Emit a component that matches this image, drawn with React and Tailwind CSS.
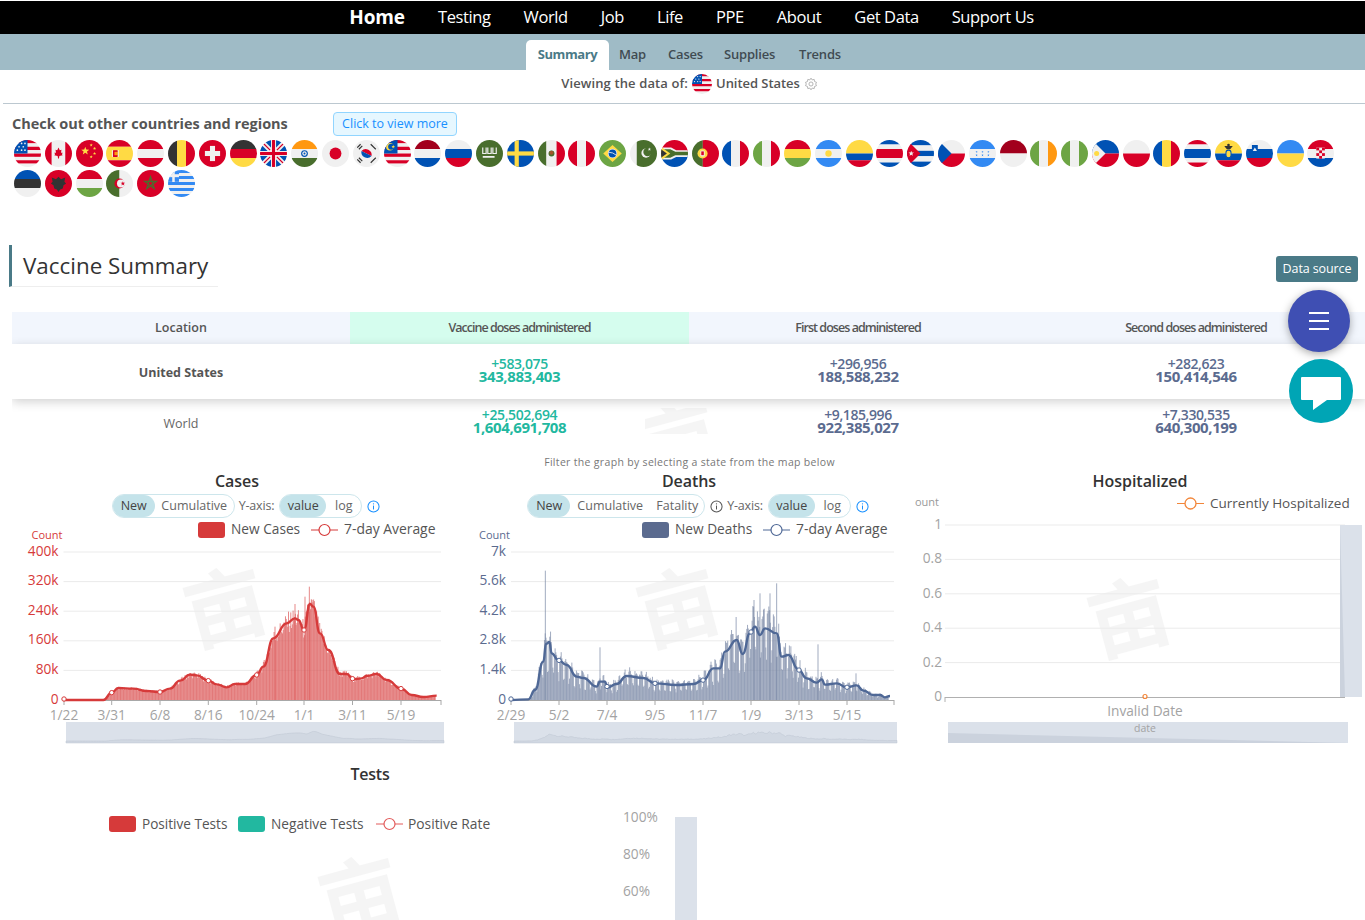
import React from 'react';

const R='#d80027',B='#0052b4',W='#f0f0f0',Y='#ffda44',G='#6da544',DG='#496e2d',LB='#338af3',K='#333333',DR='#a2001d',O='#ff9811';
const H=(cs,ws)=>{const t=(ws||cs.map(()=>1)).reduce((a,b)=>a+b,0);let y=0;return cs.map((c,i)=>{const h=((ws?ws[i]:1)/t)*32;const e=<rect key={'h'+i} x="0" y={y} width="32" height={h+0.05} fill={c}/>;y+=h;return e;});};
const V=(cs,ws)=>{const t=(ws||cs.map(()=>1)).reduce((a,b)=>a+b,0);let x=0;return cs.map((c,i)=>{const w=((ws?ws[i]:1)/t)*32;const e=<rect key={'v'+i} x={x} y="0" width={w+0.05} height="32" fill={c}/>;x+=w;return e;});};
const star=(cx,cy,r,fill,k)=>{let p=[];for(let i=0;i<10;i++){const a=-Math.PI/2+i*Math.PI/5,q=i%2?r*0.42:r;p.push((cx+q*Math.cos(a)).toFixed(2)+','+(cy+q*Math.sin(a)).toFixed(2));}return <polygon key={k} points={p.join(' ')} fill={fill}/>;};
const stripes=[R,W,R,W,R,W,R,W];
const flags={
us:<>{H(stripes)}<rect width="16" height="16" fill={B}/>{[[4,4],[9,4],[13,4],[6,8],[11,8],[4,12],[9,12],[13,12]].map(([x,y],i)=><circle key={i} cx={x} cy={y} r="1" fill={W}/>)}</>,
ca:<>{V([R,W,R],[1,2,1])}<polygon points="16,9 17.5,12 19.5,11.5 19,15 21,15 20,17 21,18 17,19 16.5,22 15.5,22 15,19 11,18 12,17 11,15 13,15 12.5,11.5 14.5,12" fill={R}/></>,
cn:<><rect width="32" height="32" fill={R}/>{star(11,13,5,Y,'a')}{star(18,6,2,Y,'b')}{star(22,10,2,Y,'c')}{star(22,16,2,Y,'d')}{star(18,20,2,Y,'e')}</>,
es:<>{H([R,Y,R],[1,2,1])}<rect x="8" y="12" width="6" height="8" rx="1" fill={R}/><rect x="10" y="14" width="5" height="4" fill={O}/><rect x="7" y="12" width="1.2" height="8" fill={W}/><rect x="14" y="12" width="1.2" height="8" fill={W}/></>,
at:H([R,W,R]),be:V([K,Y,R]),
ch:<><rect width="32" height="32" fill={R}/><rect x="13" y="7" width="6" height="18" fill={W}/><rect x="7" y="13" width="18" height="6" fill={W}/></>,
de:H([K,R,Y]),
gb:<><rect width="32" height="32" fill={W}/><polygon points="4,0 13,0 13,9" fill={B}/><polygon points="19,0 28,0 19,9" fill={B}/><polygon points="0,4 9,13 0,13" fill={B}/><polygon points="32,4 23,13 32,13" fill={B}/><polygon points="0,28 9,19 0,19" fill={B}/><polygon points="32,28 23,19 32,19" fill={B}/><polygon points="4,32 13,23 13,32" fill={B}/><polygon points="28,32 19,23 19,32" fill={B}/><rect x="14.2" width="3.6" height="32" fill={R}/><rect y="14.2" width="32" height="3.6" fill={R}/><path d="M2 2L12 12M30 2L20 12M2 30L12 20M30 30L20 20" stroke={R} strokeWidth="1.5"/></>,
in:<>{H([O,W,DG])}<circle cx="16" cy="16" r="4" fill={B}/><circle cx="16" cy="16" r="2.6" fill={W}/><circle cx="16" cy="16" r="1.2" fill={B}/></>,
jp:<><rect width="32" height="32" fill={W}/><circle cx="16" cy="16" r="7" fill={R}/></>,
kr:<><rect width="32" height="32" fill={W}/><path d="M10 13a7 7 0 0 1 12 6z" fill={R}/><path d="M10 13a7 7 0 0 0 12 6z" fill={B}/><path d="M5 9l4-4M7 11l4-4M21 5l4 4M23 7l4 4M5 23l4 4M7 21l4 4M21 27l4-4M23 25l4-4" stroke={K} strokeWidth="1.4"/></>,
my:<>{H([R,W,R,W,R,W,R,W])}<rect width="16" height="16" fill={B}/><circle cx="7" cy="8" r="4.5" fill={Y}/><circle cx="8.5" cy="8" r="3.6" fill={B}/>{star(11,8,2.2,Y,'m')}</>,
nl:H([DR,W,B]),ru:H([W,B,R]),
sa:<><rect width="32" height="32" fill={DG}/><path d="M8 9v7h4V9M14 9v7h4V9M20 9v7h4V9" stroke={W} strokeWidth="1.4" fill="none"/><path d="M8 20h14" stroke={W} strokeWidth="1.8"/></>,
se:<><rect width="32" height="32" fill={B}/><rect x="9" width="5" height="32" fill={Y}/><rect y="13.5" width="32" height="5" fill={Y}/></>,
mx:<>{V([DG,W,R],[1,1.2,1])}<circle cx="16" cy="16" r="3.5" fill={DG}/><circle cx="16" cy="15" r="2.4" fill="#a2562a"/></>,
pe:V([R,W,R]),
br:<><rect width="32" height="32" fill={G}/><polygon points="16,6 27,16 16,26 5,16" fill={Y}/><circle cx="16" cy="16" r="5.5" fill={W}/><circle cx="16" cy="16" r="4.6" fill={B}/><path d="M11.5 14.5q5 0 9 3.5" stroke={W} strokeWidth="1" fill="none"/></>,
pk:<>{V([W,DG],[1,3])}<circle cx="19" cy="15.5" r="5.5" fill={W}/><circle cx="20.8" cy="14.2" r="5" fill={DG}/>{star(23,11,2,W,'p')}</>,
za:<>{H([R,B])}<polygon points="0,9 12,9 18,12 32,12 32,20 18,20 12,23 0,23" fill={W}/><polygon points="0,11 11,11 17,14 32,14 32,18 17,18 11,21 0,21" fill={DG}/><polygon points="0,8 11,16 0,24" fill={Y}/><polygon points="0,11 7,16 0,21" fill={K}/></>,
pt:<>{V([DG,R],[2,3])}<circle cx="12.5" cy="16" r="6" fill={Y}/><rect x="10" y="12.5" width="5" height="7" rx="1.5" fill={W}/><rect x="11" y="13.5" width="3" height="4.5" fill={R}/></>,
fr:V([B,W,R]),it:V([G,W,R]),bo:H([R,Y,G]),
ar:<>{H([LB,W,LB])}<circle cx="16" cy="16" r="3.8" fill={Y}/></>,
co:H([Y,B,R],[2,1,1]),cr:H([B,W,R,W,B],[1,1,2,1,1]),
cu:<>{H([B,W,B,W,B])}<polygon points="0,0 16,16 0,32" fill={R}/>{star(5,16,3.4,W,'u')}</>,
cz:<>{H([W,R])}<polygon points="0,0 16,16 0,32" fill={B}/></>,
hn:<>{H([LB,W,LB])}{[[9,14],[16,14],[23,14],[9,18],[16,18],[23,18]].map(([x,y],i)=>star(x,y,1.4,LB,i))}</>,
id:H([DR,W]),ie:V([G,W,O]),ng:V([G,W,G]),
ph:<>{H([B,R])}<polygon points="0,0 16,16 0,32" fill={W}/><circle cx="5.5" cy="16" r="3" fill={Y}/></>,
pl:H([W,R]),ro:V([B,Y,R]),th:H([R,W,B,W,R],[1,1,2,1,1]),
ec:<>{H([Y,B,R],[2,1,1])}<rect x="13" y="12" width="6" height="9" rx="3" fill={Y} stroke={B} strokeWidth="1.2"/><polygon points="11,7 21,7 18,11 14,11" fill={K}/><circle cx="16" cy="6" r="1.6" fill={K}/></>,
si:<>{H([W,B,R])}<path d="M7 6h7v6q0 3-3.5 4.5Q7 15 7 12z" fill={B}/><polygon points="10.5,9 13,13 8,13" fill={W}/></>,
ua:H([LB,Y]),
hr:<>{H([R,W,B])}<rect x="11" y="9" width="10" height="13" fill={W}/>{[0,1,2,3].flatMap(r=>[0,1,2].map(c=>(r+c)%2?null:<rect key={r+'-'+c} x={11+c*3.4} y={9+r*3.3} width="3.4" height="3.3" fill={R}/>))}</>,
ee:H([B,K,W]),
al:<><rect width="32" height="32" fill={R}/><path d="M16 8l3 3 5-2-1 5 2 2-3 2-1 4-3 1-2 3-2-3-3-1-1-4-3-2 2-2-1-5 5 2z" fill={K}/></>,
hu:H([R,W,G]),
dz:<>{V([DG,W])}<circle cx="16" cy="16" r="6" fill={R}/><circle cx="17.8" cy="16" r="4.8" fill={W}/>{star(20,16,2.8,R,'z')}</>,
ma:<><rect width="32" height="32" fill={R}/><polygon points="16,8 20.5,22 9,13.5 23,13.5 11.5,22" fill="none" stroke={DG} strokeWidth="1.5"/></>,
gr:<>{H([LB,W,LB,W,LB,W,LB,W,LB])}<rect width="13" height="14" fill={W}/><rect width="5" height="5" fill={LB}/><rect x="8" width="5" height="5" fill={LB}/><rect y="8.5" width="5" height="5.5" fill={LB}/><rect x="8" y="8.5" width="5" height="5.5" fill={LB}/></>,
};
const order='us ca cn es at be ch de gb in jp kr my nl ru sa se mx pe br pk za pt fr it bo ar co cr cu cz hn id ie ng ph pl ro th ec si ua hr ee al hu dz ma gr'.split(' ');

function Flag({c,size=27}){
  const id=React.useId();
  return <svg width={size} height={size} viewBox="0 0 32 32" className="block"><clipPath id={id}><circle cx="16" cy="16" r="16"/></clipPath><g clipPath={`url(#${id})`}>{flags[c]}</g></svg>;
}

const interp=(pts,x)=>{for(let i=1;i<pts.length;i++){if(x<=pts[i][0]){const[a,b]=pts[i-1],[c,d]=pts[i];return b+(d-b)*(x-a)/((c-a)||1);}}return pts[pts.length-1][1];};
const rnd=(i)=>{const s=Math.sin(i*12.9898)*43758.5453;return s-Math.floor(s);};
const toPage=(p,ox,oy)=>p.map(([x,y])=>[ox+x/3,oy+y/3]);

const casesAvg=toPage([[190,750],[310,750],[335,728],[355,714],[400,716],[440,723],[480,726],[510,716],[540,692],[570,674],[590,676],[625,692],[650,703],[680,712],[705,702],[735,702],[770,675],[790,650],[820,565],[860,520],[885,505],[895,510],[912,540],[930,462],[940,470],[960,550],[985,600],[1020,672],[1040,672],[1060,688],[1085,685],[1100,678],[1130,672],[1160,690],[1205,717],[1235,735],[1270,741],[1310,737]],0,450);
const deathsAvg=toPage([[153,750],[205,748],[225,720],[250,635],[258,582],[268,576],[275,610],[295,630],[320,645],[350,680],[370,684],[410,710],[420,695],[435,695],[442,712],[470,702],[500,678],[550,684],[585,700],[650,705],[700,702],[730,690],[760,655],[780,655],[795,605],[830,570],[848,612],[870,550],[885,530],[900,555],[915,535],[950,550],[965,620],[985,615],[1015,658],[1040,685],[1070,698],[1085,688],[1095,704],[1130,700],[1160,712],[1190,706],[1210,722],[1240,735],[1260,735],[1275,742],[1290,738]],460,450);
const deathSpikes=[[256,362],[420,592],[950,400],[882,450],[900,430],[930,430],[1074,583],[1188,670]].map(([x,y])=>[460+x/3,450+y/3]);
const caseSpikes=[[928,410],[915,440],[885,462],[825,530]].map(([x,y])=>[x/3,450+y/3]);

function Bars({avg,x0,x1,base,color,amp,weekly,spikes}){
  const n=Math.round((x1-x0)/0.76);
  let d='';
  for(let i=0;i<n;i++){
    const x=x0+(i/n)*(x1-x0);
    const h=base-interp(avg,x);
    if(h<0.6) continue;
    const wk=[0.62,1.08,1.25,1.22,1.18,1.05,0.6][i%7];
    const f=weekly? wk+(rnd(i)-0.5)*0.3 : 1+(rnd(i)-0.5)*amp;
    d+=`M${x.toFixed(2)} ${base}V${(base-h*f).toFixed(1)}`;
  }
  (spikes||[]).forEach(([x,y])=>{d+=`M${x.toFixed(2)} ${base}V${y}`;});
  return <path d={d} stroke={color} strokeWidth="1" fill="none" opacity="0.72"/>;
}
const smooth=(pts)=>{let d=`M${pts[0][0]} ${pts[0][1]}`;for(let i=1;i<pts.length;i++){const p=pts[i-1],q=pts[i],m=(p[0]+q[0])/2;d+=`C${m} ${p[1]} ${m} ${q[1]} ${q[0]} ${q[1]}`;}return d;};
const Mini=({avg,x0,x1,tx0,tx1,base,amp})=>{
  const sc=(tx1-tx0)/(x1-x0);
  let pts=[];
  for(let i=0;i<=240;i++){const x=x0+(i/240)*(x1-x0);const h=base-interp(avg,x);pts.push((tx0+(x-x0)*sc).toFixed(1)+','+(741-h*0.1-(amp?rnd(i)*h*0.035:0)).toFixed(1));}
  return <polygon points={`${tx0},743 ${pts.join(' ')} ${tx1},743`} fill="#d1d8e2" stroke="#bcc4d0" strokeWidth="0.5"/>;
};

const Watermark=({x,y,size=82})=><text x={x} y={y} fontSize={size} textAnchor="middle" fill="#000" opacity="0.035" fontWeight="700" fontFamily="'Noto Sans CJK SC',sans-serif" transform={`rotate(-15 ${x} ${y})`}>亩</text>;

function Chart({ox,x0,x1,labels,color,ticks,tickLabels,avg,spikes,weekly,amp,sl0,sl1,legendRect,legendText,avgLine,lineColor,rectColor,barColor,wm}){
  const ys=[552,581.6,611.2,640.8,670.4,700];
  return <svg width="452" height="226" viewBox={`${ox} 520 452 226`} className="block" fontFamily="'Open Sans',sans-serif">
    <Watermark x={wm} y={636}/>
    <text x={x0-32} y={539} fontSize="11" fill={color}>Count</text>
    {ys.map((y,i)=><g key={i}>
      {i<5&&<line x1={x0} x2={x1} y1={y} y2={y} stroke="#ebebeb"/>}
      <text x={x0-5} y={y+3.5} fontSize="13.7" textAnchor="end" fill={color}>{labels[i]}</text>
    </g>)}
    <Bars avg={avg} x0={x0} x1={x1-5} base={700} color={barColor} amp={amp} weekly={weekly} spikes={spikes}/>
    <line x1={x0} x2={x1} y1={700.5} y2={700.5} stroke="#a8a8a8"/>
    {ticks.map((t,i)=><line key={i} x1={t} x2={t} y1={700} y2={705} stroke="#a8a8a8"/>)}
    <line x1={x1} x2={x1} y1={700} y2={705} stroke="#a8a8a8"/>
    {ticks.map((t,i)=><text key={i} x={t} y={719.5} fontSize="13.7" textAnchor="middle" fill="#a3a3a3">{tickLabels[i]}</text>)}
    <path d={smooth(avg)} fill="none" stroke={lineColor} strokeWidth="2.4"/>
    {ticks.map((t,i)=><circle key={i} cx={t} cy={Math.min(699,interp(avg,t))} r="2.2" fill="#fff" stroke={lineColor} strokeWidth="1"/>)}
    <rect x={sl0} y={722} width={sl1-sl0} height={21} fill="#dbe1ea"/>
    <Mini avg={avg} x0={x0} x1={x1} tx0={sl0} tx1={sl1} base={700} amp={weekly}/>
    <rect x={legendRect} y={522} width={27} height={16} rx="3" fill={rectColor}/>
    <text x={legendRect+33} y={534} fontSize="13.7" fill="#555">{legendText}</text>
    <line x1={avgLine} x2={avgLine+27} y1={530} y2={530} stroke={lineColor}/>
    <circle cx={avgLine+13.5} cy={530} r="5.5" fill="#fff" stroke={lineColor} strokeWidth="1.2"/>
    <text x={avgLine+33} y={534} fontSize="13.9" fill="#555">7-day Average</text>
  </svg>;
}

const Info=({color='#1890ff'})=><svg width="13" height="13" viewBox="0 0 14 14" className="shrink-0"><circle cx="7" cy="7" r="6" fill="none" stroke={color} strokeWidth="1.1"/><path d="M7 6v4.2" stroke={color} strokeWidth="1.1"/><circle cx="7" cy="4.1" r=".7" fill={color}/></svg>;

function Toggle({items,w,extra=''}){
  return <div className={`flex items-center h-6 rounded-full border border-[#cde6ec] ${extra}`}>
    {items.map((t,i)=><span key={t} style={{width:w[i]}} className={`h-[22px] flex items-center justify-center rounded-full text-[12.5px] ${i===0?'bg-[#c4e3ea] text-[#444]':'text-[#666]'}`}>{t}</span>)}
  </div>;
}

function CtlTitle({title,children}){
  return <div className="flex flex-col items-center w-full">
    <div className="h-[23px] flex items-center text-[16px] font-semibold text-[#333] tracking-[-0.05px]">{title}</div>
    {children}
  </div>;
}

const Stat=({a,b,color})=><div className={`flex flex-col items-center font-semibold ${color}`}><span className="text-[14px] leading-[12px] tracking-[-0.4px]">{a}</span><span className="text-[15px] leading-[12px] font-bold tracking-[-0.4px]">{b}</span></div>;

const subItems=[['Map','w-[59px] pl-[10px]'],['Cases','w-[56px]'],['Supplies','w-[75px]'],['Trends','w-[46px]']];

export default function App(){
  const nav=['Testing','World','Job','Life','PPE','About','Get Data','Support Us'];
  return <div className="relative w-[1365px] h-[920px] overflow-hidden bg-white font-['Open_Sans','Noto_Sans',sans-serif] text-[#555]">
    <div className="pt-px"><nav className="h-[33px] bg-black flex items-center justify-center gap-[33px] pl-[18px] text-white text-[16.5px] tracking-[-0.4px]">
      <span className="text-[19px] font-bold tracking-[-0.1px]">Home</span>
      {nav.map(n=><span key={n}>{n}</span>)}
    </nav></div>
    <div className="h-9 bg-[#9fbbc6] flex items-end pl-[526px]">
      <div className="flex items-end h-[30px] text-[13px] font-semibold text-[#3f4b52]">
        <span className="h-[30px] w-[83px] flex items-center justify-center bg-white rounded-t-[5px] text-[#4a7a87] font-bold tracking-[-0.4px]">Summary</span>
        {subItems.map(([s,c])=><span key={s} className={`h-[30px] flex items-center tracking-[-0.2px] whitespace-nowrap ${c}`}>{s}</span>)}
      </div>
    </div>
    <div className="h-[33px] flex items-center justify-center gap-[4px] pb-[6px] pl-[14px] text-[13px] font-semibold text-[#555] tracking-[0.12px]">
      <span>Viewing the data of:</span>
      <Flag c="us" size={20}/>
      <span className="tracking-[-0.05px]">United States</span>
      <svg width="14" height="14" viewBox="0 0 24 24" fill="none" stroke="#aaa" strokeWidth="1.5"><path d="M12 2l2 3 3.500-.8.6 3.600 3.400 1.400L20 12l1.500 2.800-3.400 1.400-.6 3.600L14 19l-2 3-2-3-3.500.8-.6-3.600-3.400-1.400L4 12 2.500 9.200l3.400-1.400.6-3.600L10 5z"/><circle cx="12" cy="12" r="3.500"/></svg>
    </div>
    <div className="ml-[3px] border-t border-[#bcc8d0]"/>
    <div className="flex items-center h-[24px] mt-[8px] pl-3">
      <span className="w-[321px] text-[14.5px] font-bold text-[#555] tracking-[-0.03px] whitespace-nowrap">Check out other countries and regions</span>
      <button className="h-6 w-[124px] rounded-[4px] border border-[#91d5ff] bg-[#e6f7ff] text-[#1890ff] text-[12.5px]">Click to view more</button>
    </div>
    <div className="flex flex-wrap w-[1340px] ml-[14px] mt-[4px]">
      {order.map(c=><div key={c} className="w-[30.8px] h-[30px]"><Flag c={c}/></div>)}
    </div>
    <div className="relative flex items-start justify-between mt-[45px] h-[67px]">
      <div className="ml-[9px] w-[209px] h-[42px] border-l-[3px] border-l-[#4a7a87] border-b border-b-[#eeeeee] flex items-center pl-[11px] text-[22.4px] text-[#333] whitespace-nowrap">Vaccine Summary</div>
      <button className="mt-[11px] mr-[7px] h-[26px] w-[82px] rounded-[3px] bg-[#4a7a87] text-white text-[12.5px] tracking-[-0.1px]">Data source</button>
    </div>
    <div className="ml-3 h-[124px] overflow-hidden relative">
      <div className="grid grid-cols-[338px_339px_338px_338px] w-[1353px]">
        <div className="h-8 pt-px bg-[#f2f6fd] flex items-center justify-center text-[12.5px] font-semibold text-[#555]">Location</div>
        <div className="h-8 pt-px bg-[#d5fdee] flex items-center justify-center text-[12.5px] font-semibold text-[#555] tracking-[-1px]">Vaccine doses administered</div>
        <div className="h-8 pt-px bg-[#f2f6fd] flex items-center justify-center text-[12.5px] font-semibold text-[#555] tracking-[-0.95px]">First doses administered</div>
        <div className="h-8 pt-px bg-[#f2f6fd] flex items-center justify-center text-[12.5px] font-semibold text-[#555] tracking-[-0.95px]">Second doses administered</div>
      </div>
      <div className="relative z-10 grid grid-cols-[338px_339px_338px_338px] w-[1353px] h-[55px] pb-[3px] bg-white shadow-[0_3px_10px_rgba(0,0,0,0.18)] items-center">
        <div className="text-center text-[12.5px] font-bold text-[#555] pt-[6px]">United States</div>
        <Stat a="+583,075" b="343,883,403" color="text-[#22b8a0]"/>
        <Stat a="+296,956" b="188,588,232" color="text-[#5b6b8f]"/>
        <Stat a="+282,623" b="150,414,546" color="text-[#5b6b8f]"/>
      </div>
      <div className="grid grid-cols-[338px_339px_338px_338px] w-[1353px] h-[37px] items-center pt-[9px] pb-[2px]">
        <div className="text-center text-[12.5px] text-[#666] mt-[7px]">World</div>
        <Stat a="+25,502,694" b="1,604,691,708" color="text-[#22b8a0]"/>
        <Stat a="+9,185,996" b="922,385,027" color="text-[#5b6b8f]"/>
        <Stat a="+7,330,535" b="640,300,199" color="text-[#5b6b8f]"/>
      </div>
      <svg width="80" height="26" viewBox="0 0 80 26" className="absolute left-[633px] top-[96px]"><Watermark x={40} y={62}/></svg>
    </div>
    <div className="h-[32px] pt-[21px] text-center text-[10.5px] text-[#777] leading-none pl-[14px] tracking-[0.32px]">Filter the graph by selecting a state from the map below</div>
    <div className="flex mt-[1px] ml-[11px]">
      <div className="w-[453px] flex flex-col items-center">
        <CtlTitle title="Cases">
          <div className="flex items-center gap-[4px] h-6 mt-[2px] ml-[18px]">
            <Toggle items={['New','Cumulative']} w={[42,79]}/>
            <span className="text-[12.5px] text-[#666] tracking-[-0.2px]">Y-axis:</span>
            <Toggle items={['value','log']} w={[46,35]} extra="ml-[1px]"/>
            <span className="ml-[1px]"><Info/></span>
          </div>
        </CtlTitle>
        <div className="mt-[2px]">
          <Chart ox={11} x0={63.5} x1={441} labels={['400k','320k','240k','160k','80k','0']} color="#d63a3a" ticks={[64,111.7,160,208.3,256.7,304,352.500,401]} tickLabels={['1/22','3/31','6/8','8/16','10/24','1/1','3/11','5/19']} avg={casesAvg} spikes={caseSpikes} amp={0.28} sl0={66} sl1={444} legendRect={198} legendText="New Cases" avgLine={311} lineColor="#d63a3a" rectColor="#d63a3a" barColor="#dc5a5a" wm={233}/>
        </div>
      </div>
      <div className="w-[452px] flex flex-col items-center">
        <CtlTitle title="Deaths">
          <div className="flex items-center gap-[4px] h-6 mt-[2px] ml-[18px]">
            <Toggle items={['New','Cumulative','Fatality']} w={[42,80,54]}/>
            <span className="ml-[1px]"><Info color="#555"/></span>
            <span className="text-[12.5px] text-[#666] tracking-[-0.2px]">Y-axis:</span>
            <Toggle items={['value','log']} w={[46,35]} extra="ml-[1px]"/>
            <span className="ml-[1px]"><Info/></span>
          </div>
        </CtlTitle>
        <div className="mt-[2px]">
          <Chart ox={463} x0={511} x1={894} labels={['7k','5.6k','4.2k','2.8k','1.4k','0']} color="#5b6b8f" ticks={[511,559,607,655,703,751,799,847]} tickLabels={['2/29','5/2','7/4','9/5','11/7','1/9','3/13','5/15']} avg={deathsAvg} spikes={deathSpikes} weekly sl0={514} sl1={897} legendRect={642} legendText="New Deaths" avgLine={763} lineColor="#4f6896" rectColor="#5b6b8f" barColor="#7d8aa8" wm={686}/>
        </div>
      </div>
      <div className="w-[450px] flex flex-col items-center">
        <CtlTitle title="Hospitalized"/>
        <svg width="450" height="250" viewBox="915 496 450 250" className="block mt-[4px]" fontFamily="'Open Sans',sans-serif">
          <Watermark x={1137} y={646}/>
          <text x={915} y={506} fontSize="11" fill="#999">ount</text>
          {[[525,'1'],[559.4,'0.8'],[593.8,'0.6'],[628.200,'0.4'],[662.6,'0.2'],[697,'0']].map(([y,t])=><g key={t}>
            {t!=='0'&&<line x1={945} x2={1345} y1={y} y2={y} stroke="#ebebeb"/>}
            <text x={942} y={y+4} fontSize="13.7" textAnchor="end" fill="#a3a3a3">{t}</text>
          </g>)}
          <rect x={1340} y={525} width={22} height={172} fill="#dbe1ea"/>
          <polygon points="1340,525 1345,697 1340,697" fill="#cbd2dd"/>
          <line x1={945} x2={1345} y1={697.5} y2={697.5} stroke="#b0b0b0" strokeWidth="1.2"/>
          <line x1={945} x2={945} y1={697} y2={702} stroke="#b0b0b0"/>
          <circle cx={1145} cy={696.5} r="2" fill="#fff" stroke="#f2863a" strokeWidth="1.2"/>
          <text x={1145} y={716} fontSize="13.7" textAnchor="middle" fill="#a3a3a3">Invalid Date</text>
          <rect x={948} y={722} width={400} height={21} fill="#dbe1ea"/>
          <polygon points="948,733 1348,743 948,743" fill="#cbd2dd"/>
          <text x={1145} y={732} fontSize="10.5" textAnchor="middle" fill="#a3a3a3">date</text>
          <line x1={1177} x2={1204} y1={503.5} y2={503.5} stroke="#f2863a"/>
          <circle cx={1190.5} cy={503.500} r="5.500" fill="#fff" stroke="#f2863a" strokeWidth="1.3"/>
          <text x={1210} y={508} fontSize="13.5" fill="#555">Currently Hospitalized</text>
        </svg>
      </div>
    </div>
    <div className="w-[740px] mt-[17px] text-center text-[16px] font-semibold text-[#333] tracking-[-0.2px] leading-[22px]">Tests</div>
    <svg width="740" height="140" viewBox="0 785 740 140" className="block" fontFamily="'Open Sans',sans-serif">
      <Watermark x={368} y={925}/>
      <rect x={109} y={816} width={27} height={16} rx="3" fill="#d63a3a"/>
      <text x={142} y={829} fontSize="13.6" fill="#555">Positive Tests</text>
      <rect x={238} y={816} width={27} height={16} rx="3" fill="#22b8a0"/>
      <text x={271} y={829} fontSize="13.7" fill="#555">Negative Tests</text>
      <line x1={376} x2={403} y1={824} y2={824} stroke="#e25b5b"/>
      <circle cx={389.5} cy={824} r="5.500" fill="#fff" stroke="#e25b5b" strokeWidth="1.2"/>
      <text x={408} y={829} fontSize="13.8" fill="#555">Positive Rate</text>
      {[[817,'100%'],[854,'80%'],[891,'60%']].map(([y,t])=><text key={t} x={623} y={y+5} fontSize="13.7" fill="#a3a3a3">{t}</text>)}
      <rect x={675} y={817} width={22} height={110} fill="#dbe1ea"/>
    </svg>
    <div className="absolute z-20 left-[1288px] top-[290px] w-[62px] h-[62px] rounded-full bg-[#3f4fb3] shadow-[0_2px_8px_rgba(0,0,0,0.35)] flex flex-col items-center justify-center gap-[6px]">
      <span className="w-5 h-[2px] bg-white"/><span className="w-5 h-[2px] bg-white"/><span className="w-5 h-[2px] bg-white"/>
    </div>
    <div className="absolute z-20 left-[1289px] top-[359px] w-16 h-16 rounded-full bg-[#00a5b5] flex items-center justify-center">
      <svg width="40" height="34" viewBox="0 0 40 34" className="mt-[6px]"><path d="M1 0H39Q40 0 40 1V22Q40 23 39 23H26L12 33V23H1Q0 23 0 22V1Q0 0 1 0Z" fill="#fff"/></svg>
    </div>
  </div>;
}
